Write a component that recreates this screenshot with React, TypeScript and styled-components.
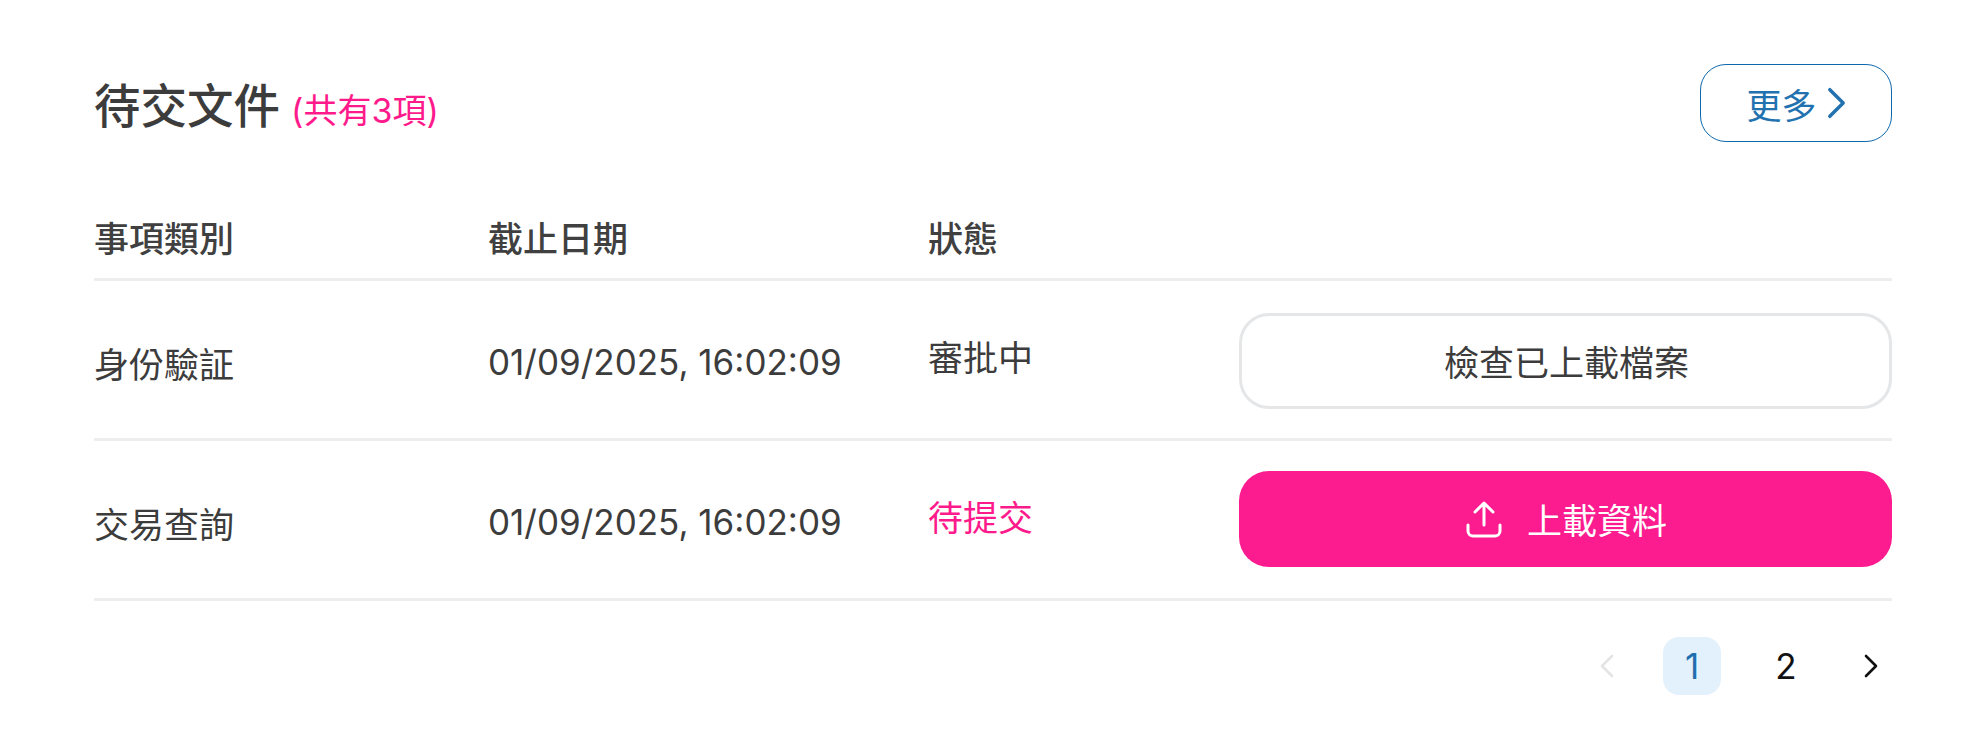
import * as React from "react"
import styled, { createGlobalStyle } from "styled-components"

const GlobalStyle = createGlobalStyle`
    html, body {
        margin: 0;
        background: #ffffff;
        font-family: Inter, "Noto Sans CJK TC", sans-serif;
    }
    * {
        box-sizing: border-box;
    }
`

const Page = styled.div`
    width: 1986px;
    height: 745px;
    padding: 64px 94px 0 94px;
    display: flex;
    flex-direction: column;
`

const Header = styled.div`
    display: flex;
    align-items: center;
    justify-content: space-between;
    height: 78px;
`

const TitleWrap = styled.div`
    display: flex;
    align-items: baseline;
    column-gap: 11px;
    padding-top: 7px;
`

const Title = styled.h2`
    margin: 0;
    font-size: 46.5px;
    font-weight: 500;
    color: #3c3c3c;
    line-height: 1.2;
`

const Count = styled.span`
    font-size: 34px;
    color: #ff1a8c;
`

const MoreButton = styled.button`
    width: 192px;
    height: 78px;
    border: 1.5px solid #0f68ab;
    border-radius: 26px;
    background: #ffffff;
    color: #2272b0;
    font-family: inherit;
    font-size: 35px;
    display: flex;
    align-items: center;
    justify-content: center;
    column-gap: 10px;
    padding: 0;
`

const Row = styled.div<{ $head?: boolean }>`
    display: grid;
    grid-template-columns: 394px 440px 311px 653px;
    align-items: center;
    height: ${(p) => (p.$head ? "auto" : "160px")};
    padding-bottom: ${(p) => (p.$head ? "16px" : "0")};
    border-bottom: 3px solid #eeeeee;
`

const Table = styled.div`
    margin-top: 74px;
    display: flex;
    flex-direction: column;
`

const HeadCell = styled.div`
    font-size: 35px;
    font-weight: 500;
    color: #404040;
    line-height: 46px;
`

const Cell = styled.div<{ $pink?: boolean; $top?: number; $bottom?: number }>`
    font-size: 35px;
    color: ${(p) => (p.$pink ? "#ff1a8c" : "#3c3c3c")};
    line-height: 46px;
    padding-top: ${(p) => p.$top ?? 0}px;
    padding-bottom: ${(p) => p.$bottom ?? 0}px;
`

const ActionButton = styled.button<{ $primary?: boolean }>`
    width: 100%;
    height: 96px;
    border-radius: 30px;
    border: ${(p) => (p.$primary ? "none" : "3px solid #e4e6e8")};
    background: ${(p) => (p.$primary ? "#fc1c90" : "#ffffff")};
    color: ${(p) => (p.$primary ? "#ffffff" : "#3c3c3c")};
    font-family: inherit;
    font-size: 35px;
    display: flex;
    align-items: center;
    justify-content: center;
    column-gap: 25px;
    padding: 0 0 0 2px;
    margin-top: ${(p) => (p.$primary ? "0" : "2px")};
    margin-bottom: ${(p) => (p.$primary ? "2px" : "0")};
`

const Pager = styled.div`
    margin-top: 36px;
    display: flex;
    justify-content: flex-end;
    align-items: center;
    column-gap: 36px;
    padding-right: 1px;
`

const PageArrow = styled.div`
    width: 40px;
    height: 58px;
    display: flex;
    align-items: center;
    justify-content: center;
`

const PageNum = styled.div<{ $active?: boolean }>`
    width: 58px;
    height: 58px;
    border-radius: 16px;
    background: ${(p) => (p.$active ? "#e3f1fd" : "transparent")};
    color: ${(p) => (p.$active ? "#1f6fae" : "#111111")};
    font-size: 35px;
    display: flex;
    align-items: center;
    justify-content: center;
`

const Chevron = ({ dir, color, w, h, sw }: { dir: "l" | "r"; color: string; w: number; h: number; sw: number }) => (
    <svg width={w} height={h} viewBox="0 0 14 24" fill="none">
        <path
            d={dir === "r" ? "M2 2l10 10L2 22" : "M12 2L2 12l10 10"}
            stroke={color}
            strokeWidth={sw}
            strokeLinecap="round"
            strokeLinejoin="round"
        />
    </svg>
)

const UploadIcon = () => (
    <svg width="36" height="38" viewBox="0 0 36 38" fill="none" stroke="#ffffff" strokeWidth="3" strokeLinecap="round" strokeLinejoin="round">
        <path d="M18 25V3M9 12l9-9 9 9" />
        <path d="M2 25v6a5 5 0 0 0 5 5h22a5 5 0 0 0 5-5v-6" />
    </svg>
)

export default function App() {
    return (
        <Page>
            <GlobalStyle />
            <Header>
                <TitleWrap>
                    <Title>待交文件</Title>
                    <Count>(共有3項)</Count>
                </TitleWrap>
                <MoreButton>
                    更多
                    <Chevron dir="r" color="#2272b0" w={19} h={32} sw={2.6} />
                </MoreButton>
            </Header>
            <Table>
                <Row $head>
                    <HeadCell>事項類別</HeadCell>
                    <HeadCell>截止日期</HeadCell>
                    <HeadCell>狀態</HeadCell>
                    <div />
                </Row>
                <Row>
                    <Cell $top={10}>身份驗証</Cell>
                    <Cell $top={4}>01/09/2025, 16:02:09</Cell>
                    <Cell $bottom={4}>審批中</Cell>
                    <ActionButton>檢查已上載檔案</ActionButton>
                </Row>
                <Row>
                    <Cell $top={10}>交易查詢</Cell>
                    <Cell $top={4}>01/09/2025, 16:02:09</Cell>
                    <Cell $bottom={4} $pink>待提交</Cell>
                    <ActionButton $primary>
                        <UploadIcon />
                        上載資料
                    </ActionButton>
                </Row>
            </Table>
            <Pager>
                <PageArrow>
                    <Chevron dir="l" color="#e4e4e4" w={14} h={24} sw={2.6} />
                </PageArrow>
                <PageNum $active>1</PageNum>
                <PageNum>2</PageNum>
                <PageArrow>
                    <Chevron dir="r" color="#111111" w={14} h={24} sw={2.6} />
                </PageArrow>
            </Pager>
        </Page>
    )
}
